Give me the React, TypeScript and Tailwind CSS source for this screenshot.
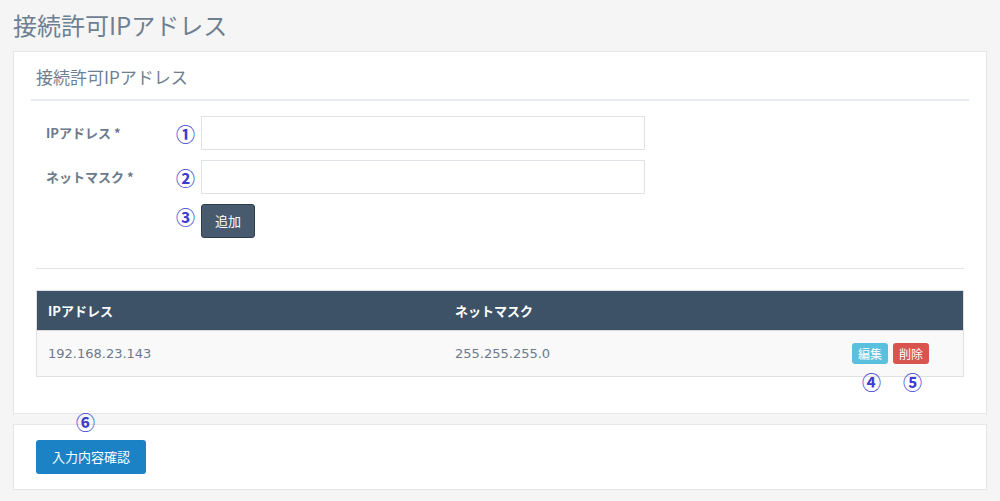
const FONT = "font-['Noto_Sans_CJK_JP','Noto_Sans',sans-serif]";

function Num({ n, className = "" }: { n: string; className?: string }) {
  return (
    <span className={`text-[19px] leading-none font-bold text-[#3b3bd0] ${className}`}>{n}</span>
  );
}

function FormRow({ label, n }: { label: string; n: string }) {
  return (
    <div className="flex items-center h-[34px]">
      <div className="w-[145px] pl-[15px] text-[13px] font-bold text-[#6b7a8c]">{label}</div>
      <Num n={n} className="w-[25px]" />
      <input className="w-[444px] h-[34px] border border-[#dfe3e8] bg-white outline-none" />
    </div>
  );
}

export default function App() {
  return (
    <div className={`${FONT} w-[1000px] min-h-[501px] bg-[#f5f5f5] px-[13px] pt-[7px]`}>
      <h1 className="text-[24px] leading-[36px] text-[#6e7f91] mb-[8px]">接続許可IPアドレス</h1>

      <div className="bg-white border border-[#e6e6e6] px-[17px] pb-[36px]">
        <div className="border-b-2 border-[#e7eaee] pl-[5px] pt-[11px] pb-[8px]">
          <h2 className="text-[17px] leading-[28px] text-[#6e7f91]">接続許可IPアドレス</h2>
        </div>

        <div className="pt-[15px] flex flex-col gap-[10px]">
          <FormRow label="IPアドレス *" n="①" />
          <FormRow label="ネットマスク *" n="②" />
          <div className="flex items-center">
            <div className="w-[145px]" />
            <Num n="③" className="w-[25px] -mt-[10px]" />
            <button className="h-[34px] px-[13px] bg-[#475a6e] border border-[#2f3d4b] rounded-[3px] text-white text-[13px]">
              追加
            </button>
          </div>
        </div>

        <div className="mx-[5px] mt-[30px] border-t border-[#e4e4e4]" />

        <div className="mx-[5px] mt-[21px] border border-[#e0e0e0]">
          <div className="flex h-[40px] items-center bg-[#3d5266] text-white text-[13px] font-bold border-b-[1px] border-[#d8d8d8]">
            <div className="w-[418px] pl-[11px]">IPアドレス</div>
            <div className="flex-1">ネットマスク</div>
          </div>
          <div className="relative flex h-[45px] items-center bg-[#f9f9f9] text-[13px] text-[#6b7a8c]">
            <div className="w-[418px] pl-[11px] font-['DejaVu_Sans',sans-serif]">192.168.23.143</div>
            <div className="flex-1 font-['DejaVu_Sans',sans-serif]">255.255.255.0</div>
            <div className="flex gap-[5px] pr-[34px]">
              <div className="relative">
                <button className="h-[21px] px-[6px] rounded-[3px] bg-[#5bc0de] text-white text-[12px] leading-[21px]">編集</button>
                <Num n="④" className="absolute left-[10px] top-[29px]" />
              </div>
              <div className="relative">
                <button className="h-[21px] px-[6px] rounded-[3px] bg-[#d9534f] text-white text-[12px] leading-[21px]">削除</button>
                <Num n="⑤" className="absolute left-[10px] top-[29px]" />
              </div>
            </div>
          </div>
        </div>
      </div>

      <div className="relative mt-[10px] bg-white border border-[#e6e6e6] px-[22px] py-[15px]">
        <Num n="⑥" className="absolute left-[62px] -top-[13px]" />
        <button className="h-[34px] px-[16px] rounded-[3px] bg-[#1b82c5] text-white text-[13px]">入力内容確認</button>
      </div>
    </div>
  );
}
